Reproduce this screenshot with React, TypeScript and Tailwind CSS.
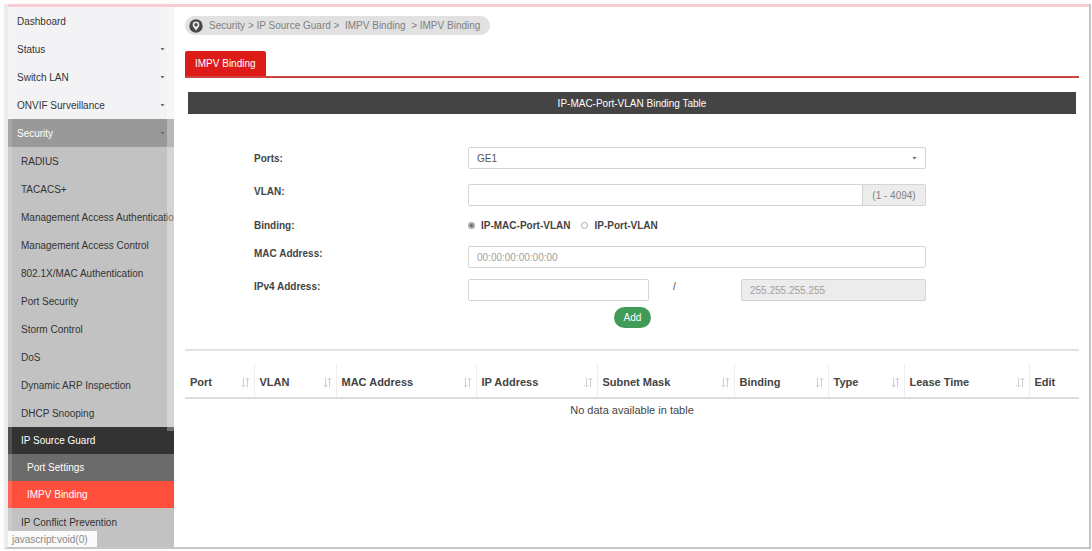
import React, { useState } from "react";
import clsx from "clsx";

type MenuItem = {
  label: string;
  arrow?: boolean;
};

type Column = {
  title: string;
  width: string;
  sortable?: boolean;
};

const topMenu: MenuItem[] = [
  { label: "Dashboard" },
  { label: "Status", arrow: true },
  { label: "Switch LAN", arrow: true },
  { label: "ONVIF Surveillance", arrow: true },
];

const securityMenu = [
  "RADIUS",
  "TACACS+",
  "Management Access Authentication",
  "Management Access Control",
  "802.1X/MAC Authentication",
  "Port Security",
  "Storm Control",
  "DoS",
  "Dynamic ARP Inspection",
  "DHCP Snooping",
];

const columns: Column[] = [
  { title: "Port", width: "w-[69px]", sortable: true },
  { title: "VLAN", width: "w-[82px]", sortable: true },
  { title: "MAC Address", width: "w-[140px]", sortable: true },
  { title: "IP Address", width: "w-[121px]", sortable: true },
  { title: "Subnet Mask", width: "w-[137px]", sortable: true },
  { title: "Binding", width: "w-[94px]", sortable: true },
  { title: "Type", width: "w-[76px]", sortable: true },
  { title: "Lease Time", width: "w-[125px]", sortable: true },
  { title: "Edit", width: "w-[50px]" },
];

const inputClass =
  "h-[22px] w-full min-w-0 rounded-xs border border-[#d4d4d4] bg-white px-2 text-[10px] text-[#555] placeholder:text-[#a0a0a0] outline-none disabled:bg-[#ececec]";

export default function App() {
  const [binding, setBinding] = useState("ip-mac");

  return (
    <div className="min-h-screen bg-[#fdfdfd] pt-1 pr-px pb-[2px] pl-1 font-['Liberation_Sans',Arial,sans-serif] text-[10px] text-[#444]">
      <div className="flex min-h-[545px] flex-col border-r-2 border-b-2 border-l-4 border-r-[#c6c6c6] border-b-[#c6c6c6] border-l-[#ececee] bg-white">
        <div className="h-[3px] shrink-0 bg-[#f6cdd2]" />
        <div className="flex flex-1">
          <Sidebar />

          <main className="min-w-0 flex-1 pt-[9px] pr-[10px] pl-[11px]">
            <nav
              aria-label="Breadcrumb"
              className="flex h-[19px] w-fit items-center gap-[6px] rounded-full bg-[#e1e1e1] pr-[10px] pl-1 text-[#808080]"
            >
              <PinIcon />
              <span className="whitespace-pre">
                {"Security > IP Source Guard >  IMPV Binding  > IMPV Binding"}
              </span>
            </nav>

            <div className="mt-4 flex border-b-2 border-[#c9453e]">
              <a href="#impv" className="flex h-[25px] items-center rounded-t-xs bg-[#dd1c1a] px-[10px] text-white">
                IMPV Binding
              </a>
            </div>

            <h1 className="mx-[3px] mt-[14px] flex h-[22px] items-center justify-center bg-[#444] text-white">
              IP-MAC-Port-VLAN Binding Table
            </h1>

            <form className="pt-[33px] pr-[153px] pl-[69px]" onSubmit={(e) => e.preventDefault()}>
              <Field label="Ports:" htmlFor="ports" className="mb-[15px] items-center">
                <div className="relative">
                  <select id="ports" className={clsx(inputClass, "appearance-none")}>
                    <option>GE1</option>
                  </select>
                  <Caret className="pointer-events-none absolute top-[10px] right-[9px]" />
                </div>
              </Field>

              <Field label="VLAN:" htmlFor="vlan" className="mb-[8px] items-start">
                <div className="flex">
                  <input id="vlan" className={clsx(inputClass, "rounded-r-none")} />
                  <span className="flex h-[22px] w-[63px] shrink-0 items-center justify-center rounded-r-xs border border-l-0 border-[#d4d4d4] bg-[#ececec] text-[#808080]">
                    (1 - 4094)
                  </span>
                </div>
              </Field>

              <div className="mb-[10px] grid h-[22px] grid-cols-[214px_1fr] items-center">
                <span id="binding-label" className="font-bold">
                  Binding:
                </span>
                <div role="radiogroup" aria-labelledby="binding-label" className="flex gap-[11px] font-bold">
                  <Radio
                    label="IP-MAC-Port-VLAN"
                    checked={binding === "ip-mac"}
                    onChange={() => setBinding("ip-mac")}
                  />
                  <Radio label="IP-Port-VLAN" checked={binding === "ip"} onChange={() => setBinding("ip")} />
                </div>
              </div>

              <Field label="MAC Address:" htmlFor="mac" className="mb-[11px] items-start">
                <input id="mac" className={inputClass} placeholder="00:00:00:00:00:00" />
              </Field>

              <Field label="IPv4 Address:" htmlFor="ipv4" className="mb-[6px] items-start">
                <div className="grid grid-cols-[181fr_92fr_185fr]">
                  <input id="ipv4" className={inputClass} />
                  <span className="pl-6">/</span>
                  <input
                    aria-label="Subnet Mask"
                    className={inputClass}
                    placeholder="255.255.255.255"
                    disabled
                  />
                </div>
              </Field>

              <div className="pl-[360px]">
                <button type="submit" className="h-[21px] w-[37px] rounded-full bg-[#3f9b57] text-white">
                  Add
                </button>
              </div>
            </form>

            <hr className="mt-[21px] border-t-2 border-[#e2e2e2]" />

            <table className="mt-[13px] w-full table-fixed border-collapse text-[11px]">
              <thead>
                <tr className="border-b-2 border-[#dcdcdc]">
                  {columns.map((col) => (
                    <th
                      key={col.title}
                      className={clsx(
                        "h-[34px] border-r border-[#eee] p-0 pt-1 text-left font-bold last:border-r-0",
                        col.width
                      )}
                    >
                      <div className="flex items-center justify-between pr-1 pl-[5px] whitespace-nowrap">
                        {col.title}
                        {col.sortable ? <SortIcon /> : null}
                      </div>
                    </th>
                  ))}
                </tr>
              </thead>
              <tbody>
                <tr>
                  <td colSpan={columns.length} className="h-6 text-center">
                    No data available in table
                  </td>
                </tr>
              </tbody>
            </table>
          </main>
        </div>
      </div>
    </div>
  );
}

function Sidebar() {
  return (
    <aside className="relative w-[166px] shrink-0 overflow-hidden bg-[#f3f3f5] text-[#333]">
      <nav className="flex h-full flex-col whitespace-nowrap">
        {topMenu.map((item) => (
          <a key={item.label} href="#menu" className="flex h-7 items-center justify-between pr-[9px] pl-[9px]">
            {item.label}
            {item.arrow ? <Caret /> : null}
          </a>
        ))}
        <a href="#security" className="flex h-7 items-center justify-between bg-[#999] pr-[9px] pl-[9px] text-white">
          Security
          <Caret />
        </a>

        <div className="flex-1 bg-[#c2c2c2]">
          {securityMenu.map((label) => (
            <a key={label} href="#menu" className="flex h-7 items-center pl-[13px]">
              {label}
            </a>
          ))}
          <a href="#menu" className="flex h-[27px] items-center bg-[#333] pl-[13px] text-white">
            IP Source Guard
          </a>
          <a href="#menu" className="flex h-[27px] items-center bg-[#6b6b6b] pl-[19px] text-white">
            Port Settings
          </a>
          <a href="#impv" className="flex h-[27px] items-center bg-[#ff4e3b] pl-[19px] text-white">
            IMPV Binding
          </a>
          <a href="#menu" className="flex h-7 items-center pl-[13px]">
            IP Conflict Prevention
          </a>
        </div>
      </nav>

      {/* overlay scrollbar and the browser's link status */}
      <div className="pointer-events-none absolute top-0 right-0 h-[424px] w-[7px] bg-white/30" />
      <div className="pointer-events-none absolute inset-y-0 left-0 w-1 bg-white/15" />
      <div className="absolute bottom-0 left-0 flex h-4 w-[89px] items-center bg-[#fafafa] pl-1 text-[#888]">
        javascript:void(0)
      </div>
    </aside>
  );
}

function Field(props: { label: string; htmlFor: string; className?: string; children: React.ReactNode }) {
  return (
    <div className={clsx("grid grid-cols-[214px_1fr]", props.className)}>
      <label htmlFor={props.htmlFor} className="font-bold">
        {props.label}
      </label>
      {props.children}
    </div>
  );
}

function Radio(props: { label: string; checked: boolean; onChange: () => void }) {
  return (
    <label className="flex items-center gap-[6px]">
      <input
        type="radio"
        name="binding"
        checked={props.checked}
        onChange={props.onChange}
        className="h-[7px] w-[7px] appearance-none rounded-full border border-[#aaa] bg-white checked:border-2 checked:bg-[#666]"
      />
      {props.label}
    </label>
  );
}

function Caret(props: { className?: string }) {
  return (
    <svg width="5" height="3" viewBox="0 0 5 3" className={props.className} aria-hidden="true">
      <path d="M0.5 0h4L2.5 2.6z" fill="#666" />
    </svg>
  );
}

function SortIcon() {
  return (
    <svg width="9" height="11" viewBox="0 0 9 11" fill="none" stroke="#cfcfcf" aria-hidden="true">
      <path d="M2.5 0.5v9M0.5 8l2 2 2-2M6.5 10.5v-9M4.8 3l1.7-2 1.7 2" />
    </svg>
  );
}

function PinIcon() {
  return (
    <svg width="14" height="14" viewBox="0 0 14 14" aria-hidden="true">
      <circle cx="7" cy="7" r="6.7" fill="#484848" />
      <path d="M7 11.6C5 9 3.6 7.4 3.6 5.8a3.4 3.4 0 0 1 6.8 0C10.4 7.4 9 9 7 11.6z" fill="#e8e8e8" />
      <circle cx="7" cy="5.8" r="1.7" fill="#484848" />
    </svg>
  );
}
